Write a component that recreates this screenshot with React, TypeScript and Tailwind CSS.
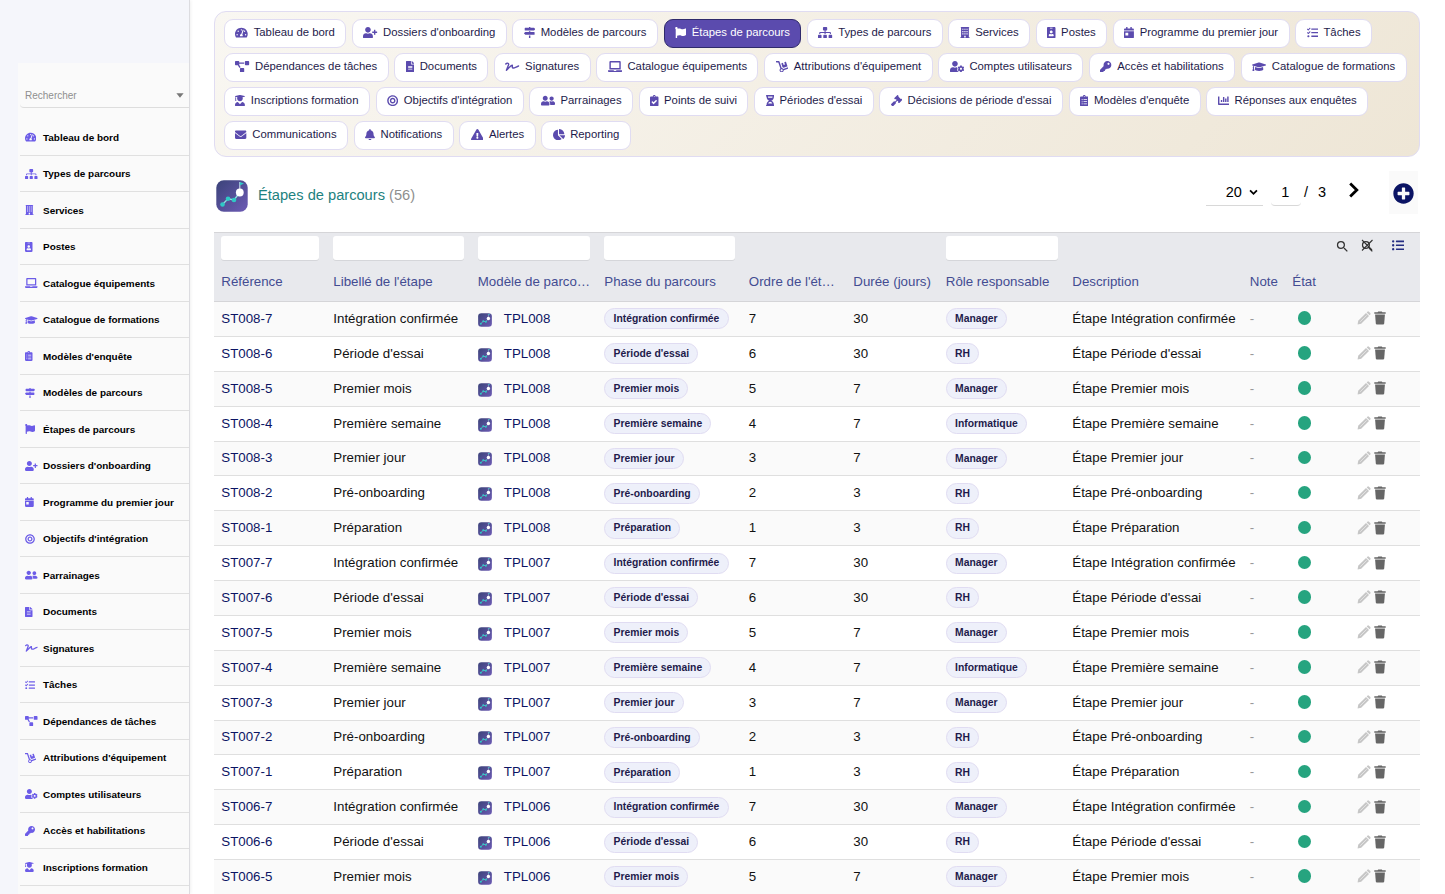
import React from 'react';
import {
  FaBell, FaBullseye, FaCalendarDay, FaChartBar, FaChartPie, FaClipboardCheck,
  FaClipboardList, FaDolly, FaEnvelope, FaExclamationTriangle, FaFileAlt, FaFlag, FaGavel, FaGraduationCap,
  FaHourglassHalf, FaIdBadge, FaKey, FaLaptop, FaListUl, FaMapSigns, FaPlusCircle, FaProjectDiagram,
  FaSignature, FaSitemap, FaTachometerAlt, FaTasks, FaUserCog, FaUserFriends, FaUserGraduate, FaUserPlus,
} from 'react-icons/fa';
import { MdSearch } from 'react-icons/md';

type NavItem = { label: string; icon: React.ComponentType<{ className?: string }>; w: string };

// glyph widths relative to the icon font size
const XS = 'w-[0.75em]';
const S = 'w-[0.875em]';
const M = 'w-[1em]';
const L = 'w-[1.125em]';
const XL = 'w-[1.25em]';

const BuildingIcon: React.FC<{ className?: string }> = ({ className }) => (
  <svg viewBox="0 0 448 512" className={className} fill="currentColor">
    <path
      fillRule="evenodd"
      d="M32 0 H416 V24 H400 V480 H448 V512 H0 V480 H48 V24 H32 Z M104 76 V128 H156 V76 Z M198 76 V128 H250 V76 Z M292 76 V128 H344 V76 Z M104 180 V232 H156 V180 Z M198 180 V232 H250 V180 Z M292 180 V232 H344 V180 Z M104 284 V336 H156 V284 Z M198 284 V336 H250 V284 Z M292 284 V336 H344 V284 Z M190 400 V480 H258 V400 Z"
    />
  </svg>
);

const nav: Record<string, NavItem> = {
  dashboard: { label: 'Tableau de bord', icon: FaTachometerAlt, w: L },
  dossiers: { label: "Dossiers d'onboarding", icon: FaUserPlus, w: XL },
  modeles: { label: 'Modèles de parcours', icon: FaMapSigns, w: M },
  etapes: { label: 'Étapes de parcours', icon: FaFlag, w: M },
  types: { label: 'Types de parcours', icon: FaSitemap, w: XL },
  services: { label: 'Services', icon: BuildingIcon, w: S },
  postes: { label: 'Postes', icon: FaIdBadge, w: XS },
  programme: { label: 'Programme du premier jour', icon: FaCalendarDay, w: S },
  taches: { label: 'Tâches', icon: FaTasks, w: M },
  dependances: { label: 'Dépendances de tâches', icon: FaProjectDiagram, w: XL },
  documents: { label: 'Documents', icon: FaFileAlt, w: XS },
  signatures: { label: 'Signatures', icon: FaSignature, w: XL },
  equipements: { label: 'Catalogue équipements', icon: FaLaptop, w: XL },
  attributions: { label: "Attributions d'équipement", icon: FaDolly, w: L },
  comptes: { label: 'Comptes utilisateurs', icon: FaUserCog, w: XL },
  acces: { label: 'Accès et habilitations', icon: FaKey, w: M },
  formations: { label: 'Catalogue de formations', icon: FaGraduationCap, w: XL },
  inscriptions: { label: 'Inscriptions formation', icon: FaUserGraduate, w: S },
  objectifs: { label: "Objectifs d'intégration", icon: FaBullseye, w: M },
  parrainages: { label: 'Parrainages', icon: FaUserFriends, w: XL },
  suivi: { label: 'Points de suivi', icon: FaClipboardCheck, w: XS },
  essai: { label: "Périodes d'essai", icon: FaHourglassHalf, w: XS },
  decisions: { label: "Décisions de période d'essai", icon: FaGavel, w: M },
  enquetes: { label: "Modèles d'enquête", icon: FaClipboardList, w: XS },
  reponses: { label: 'Réponses aux enquêtes', icon: FaChartBar, w: M },
  communications: { label: 'Communications', icon: FaEnvelope, w: M },
  notifications: { label: 'Notifications', icon: FaBell, w: S },
  alertes: { label: 'Alertes', icon: FaExclamationTriangle, w: L },
  reporting: { label: 'Reporting', icon: FaChartPie, w: 'w-[1.0625em]' },
};

const topRows = [
  ['dashboard', 'dossiers', 'modeles', 'etapes', 'types', 'services', 'postes', 'programme', 'taches'],
  ['dependances', 'documents', 'signatures', 'equipements', 'attributions', 'comptes', 'acces', 'formations'],
  ['inscriptions', 'objectifs', 'parrainages', 'suivi', 'essai', 'decisions', 'enquetes', 'reponses'],
  ['communications', 'notifications', 'alertes', 'reporting'],
];

const sideItems = [
  'dashboard', 'types', 'services', 'postes', 'equipements', 'formations', 'enquetes', 'modeles', 'etapes',
  'dossiers', 'programme', 'objectifs', 'parrainages', 'documents', 'signatures', 'taches', 'dependances',
  'attributions', 'comptes', 'acces', 'inscriptions',
];

const phases = [
  { name: 'Préparation', days: 3, role: 'RH' },
  { name: 'Pré-onboarding', days: 3, role: 'RH' },
  { name: 'Premier jour', days: 7, role: 'Manager' },
  { name: 'Première semaine', days: 7, role: 'Informatique' },
  { name: 'Premier mois', days: 7, role: 'Manager' },
  { name: "Période d'essai", days: 30, role: 'RH' },
  { name: 'Intégration confirmée', days: 30, role: 'Manager' },
];

const rows = ['008', '007', '006']
  .flatMap((tpl) => [7, 6, 5, 4, 3, 2, 1].map((order) => ({ tpl, order, ...phases[order - 1] })))
  .slice(0, 17);

const columns = [
  { label: 'Référence', filter: true },
  { label: "Libellé de l'étape", filter: true },
  { label: 'Modèle de parco…', filter: true },
  { label: 'Phase du parcours', filter: true },
  { label: "Ordre de l'ét…", filter: false },
  { label: 'Durée (jours)', filter: false },
  { label: 'Rôle responsable', filter: true },
  { label: 'Description', filter: false },
  { label: 'Note', filter: false },
  { label: 'État', filter: false },
];

const gridCols =
  'grid grid-cols-[112px_144.5px_126.5px_144.5px_104.5px_92.5px_126.5px_177.5px_42.5px_64.5px_1fr] pl-[7.3px]';

const StepLogo: React.FC<{ className: string; id: string }> = ({ className, id }) => (
  <svg viewBox="0 0 32 32" className={className}>
    <defs>
      <linearGradient id={id} x1="0" y1="0" x2="1" y2="1">
        <stop offset="0" stopColor="#3b4379" />
        <stop offset="1" stopColor="#6d5bb5" />
      </linearGradient>
    </defs>
    <rect x="0.3" y="0.3" width="31.4" height="31.4" rx="7.5" fill={`url(#${id})`} />
    <path d="M6.5 24.5 L12 18.8 L18 20 L23.8 12.5" fill="none" stroke="#8fe0e0" strokeWidth="1.3" />
    <circle cx="6.5" cy="24.5" r="2.3" fill="#2fc9c6" />
    <circle cx="12" cy="18.8" r="2.3" fill="#2fc9c6" />
    <circle cx="18" cy="20" r="2.3" fill="#2fc9c6" />
    <path d="M23.8 12.5 V2" stroke="#d9e6f2" strokeWidth="1" />
    <path d="M23.8 2 L28 3.6 L23.8 5.6 Z" fill="#2fc9c6" />
    <circle cx="23.8" cy="12.5" r="3.9" fill="#fff" />
  </svg>
);

const PencilIcon = () => (
  <svg viewBox="0 0 14 14" className="h-[14px] w-[14px]">
    <path d="M0.6 13.4 L1.2 9.8 L9 2 L12 5 L4.2 12.8 Z" fill="#c6c6c6" />
    <path d="M9.7 1.4 L10.6 0.6 Q11.3 0.1 11.9 0.7 L13.3 2.1 Q13.9 2.7 13.4 3.4 L12.6 4.3 Z" fill="#c6c6c6" />
    <path d="M3.2 10.8 L9.7 4.3" stroke="#efefef" strokeWidth="0.7" />
  </svg>
);

const TrashIcon = () => (
  <svg viewBox="0 0 12 14" className="h-[14px] w-[12px]">
    <path d="M0.3 1.2 H3.6 L4.2 0.4 H7.8 L8.4 1.2 H11.7 V2.7 H0.3 Z" fill="#666" />
    <path d="M1.1 3.6 H10.9 L10.2 12.6 Q10.1 13.6 9.1 13.6 H2.9 Q1.9 13.6 1.8 12.6 Z" fill="#666" />
  </svg>
);

const Pill: React.FC<{ children: React.ReactNode }> = ({ children }) => (
  <span className="inline-flex h-[21px] items-center rounded-full border border-[#e0dcf2] bg-[#eef0fa] px-[8.3px] text-[10.35px] font-bold text-[#1e1b4b]">
    {children}
  </span>
);

const Sidebar = () => (
  <aside className="flex h-full w-[190px] shrink-0 flex-col border-r border-[#dcdce0] bg-[#f5f6fb] pt-[63px] pl-[18px] shadow-[1px_0_3px_rgba(0,0,0,0.06)]">
    <div className="flex-1 bg-[#fafafa] pt-[20px] pl-[2px]">
      <div className="flex h-[25px] items-center justify-between rounded-bl border-b border-[#dddddd] pr-[5px] pl-[5px] text-[10px] text-[#8f8f8f]">
        <span>Rechercher</span>
        <svg viewBox="0 0 8 5" className="mt-[1px] h-[5px] w-[8px]">
          <path d="M0.4 0.2 H7.6 L4 4.8 Z" fill="#777" />
        </svg>
      </div>
      <nav className="pt-[11.3px]">
        {sideItems.map((key) => {
          const { label, icon: Icon, w } = nav[key];
          return (
            <div key={key} className="flex h-[36.5px] items-center border-b border-[#e0e0e0] pt-[2px] pl-[5px]">
              <span className="flex w-[18px] shrink-0 pb-[2px] text-[10px]">
                <Icon className={`h-[1em] shrink-0 text-[#6c5ce7] ${w}`} />
              </span>
              <span className="text-[9.95px] font-bold whitespace-nowrap text-black">{label}</span>
            </div>
          );
        })}
      </nav>
    </div>
  </aside>
);

const TopMenu = () => (
  <div className="flex h-[146px] flex-col gap-[5px] rounded-[12px] border border-[#e0dcf2] bg-linear-135 from-[#f9f7f2] to-[#eee6d6] pt-[7px] pl-[9px]">
    {topRows.map((row) => (
      <div key={row[0]} className="flex h-[29px] gap-[5.7px]">
        {row.map((key) => {
          const { label, icon: Icon, w } = nav[key];
          const active = key === 'etapes';
          return (
            <div
              key={key}
              className={`flex h-[29px] items-center gap-[5.5px] rounded-[9px] border px-[10.4px] text-[11.33px] whitespace-nowrap ${active ? 'border-[#2f2a6b] bg-[#5b4bae] text-white' : 'border-[#e0dcf2] bg-white text-[#1e1b4b]'}`}
            >
              <Icon className={`-mt-[1.5px] h-[1em] shrink-0 ${w} ${active ? 'text-white' : 'text-[#5b4bae]'}`} />
              <span className="pb-[2px]">{label}</span>
            </div>
          );
        })}
      </div>
    ))}
  </div>
);

const ListHeader = () => (
  <div className="flex h-[75px] items-start pl-[2px]">
    <StepLogo id="logo-main" className="mt-[23px] h-[32px] w-[32px]" />
    <h1 className="mt-[27px] ml-[10px] text-[14.65px] leading-[22px] text-[#1d8280]">
      Étapes de parcours <span className="text-[#8f8f8f]">(56)</span>
    </h1>
    <div className="mt-[20px] ml-auto flex text-[14.5px] text-black">
      <div className="flex h-[29px] w-[57px] items-center justify-end gap-[7px] border-b border-[#d8d8d8] pt-[3px] pr-[5px]">
        20
        <svg viewBox="0 0 10 7" className="h-[7px] w-[9px]">
          <path d="M1.2 1.2 L5 5 L8.8 1.2" fill="none" stroke="#000" strokeWidth="2" />
        </svg>
      </div>
      <div className="ml-[8px] flex h-[29px] w-[30px] items-center justify-center rounded-b border-b border-[#d8d8d8] pt-[3px] pr-[1px]">1</div>
      <div className="ml-[3px] flex h-[29px] items-center gap-[10px] pt-[3px]">
        <span>/</span>
        <span>3</span>
      </div>
      <svg viewBox="0 0 12 16" className="mt-[5px] ml-[22px] h-[16px] w-[12px]">
        <path d="M2.2 1.6 L8.8 8 L2.2 14.4" fill="none" stroke="#000" strokeWidth="2.8" />
      </svg>
    </div>
    <div className="mt-[14px] mr-[2px] ml-[29px] flex h-[43px] w-[29px] items-center justify-center bg-[#fafafa] pt-[2px]">
      <FaPlusCircle size={21} className="text-[#0b1464]" />
    </div>
  </div>
);

const StepsTable = () => (
  <div className="text-[13.3px]">
    <div className="h-[70px] border-t border-b border-[#d5d5d8] bg-[#e8e9ed]">
      <div className={gridCols}>
        {columns.map((col) => (
          <div key={col.label} className="min-w-0 pr-[14px]">
            <div className="h-[31px] pt-[3px]">
              {col.filter && <div className="h-[24px] rounded-[3px] bg-white shadow-[0_1px_0_rgba(0,0,0,0.08)]" />}
            </div>
            <div className="mt-[7px] h-[22px] leading-[22px] whitespace-nowrap text-[#434c92]">{col.label}</div>
          </div>
        ))}
        <div className="flex h-[24px] items-center">
          <MdSearch size={15} className="mt-[2px] -ml-[22px] text-[#333]" />
          <span className="relative ml-[10.5px] h-[15px] w-[15px]">
            <MdSearch size={15} className="mt-[1px] text-[#333]" />
            <svg viewBox="0 0 15 15" className="absolute inset-0 h-[15px] w-[15px]">
              <path d="M2 2 L12 12 M12.5 2 L2 12.5" stroke="#333" strokeWidth="1.1" />
            </svg>
          </span>
          <FaListUl size={12.5} className="ml-[16.5px] text-[#252e83]" />
        </div>
      </div>
    </div>
    {rows.map((row, i) => (
      <div
        key={`${row.tpl}-${row.order}`}
        className={`${gridCols} h-[34.88px] items-center border-b border-[#dfdfdf] whitespace-nowrap text-[#111] ${i % 2 === 0 ? 'bg-[#fafafa]' : 'bg-white'}`}
      >
        <span className="text-[#0b1464]">{`ST${row.tpl}-${row.order}`}</span>
        <span>{row.name}</span>
        <span className="flex items-center gap-[12px] text-[#0b1464]">
          <StepLogo id={`logo-${i}`} className="mt-[2px] h-[14px] w-[14px]" />
          {`TPL${row.tpl}`}
        </span>
        <span className="flex"><Pill>{row.name}</Pill></span>
        <span>{row.order}</span>
        <span>{row.days}</span>
        <span className="flex"><Pill>{row.role}</Pill></span>
        <span>{`Étape ${row.name}`}</span>
        <span className="text-[#999]">-</span>
        <span className="-mt-[1.5px] pl-[5.5px]">
          <span className="block h-[13.5px] w-[13.5px] rounded-full bg-[#26a47f]" />
        </span>
        <span className="-mt-[1px] flex items-center gap-[3px]">
          <PencilIcon />
          <TrashIcon />
        </span>
      </div>
    ))}
  </div>
);

export default function App() {
  return (
    <div className="flex h-[894px] w-[1445px] overflow-hidden bg-white font-['Liberation_Sans',Arial,sans-serif]">
      <Sidebar />
      <main className="w-[1230px] pt-[11px] pl-[24px]">
        <TopMenu />
        <ListHeader />
        <StepsTable />
      </main>
    </div>
  );
}
